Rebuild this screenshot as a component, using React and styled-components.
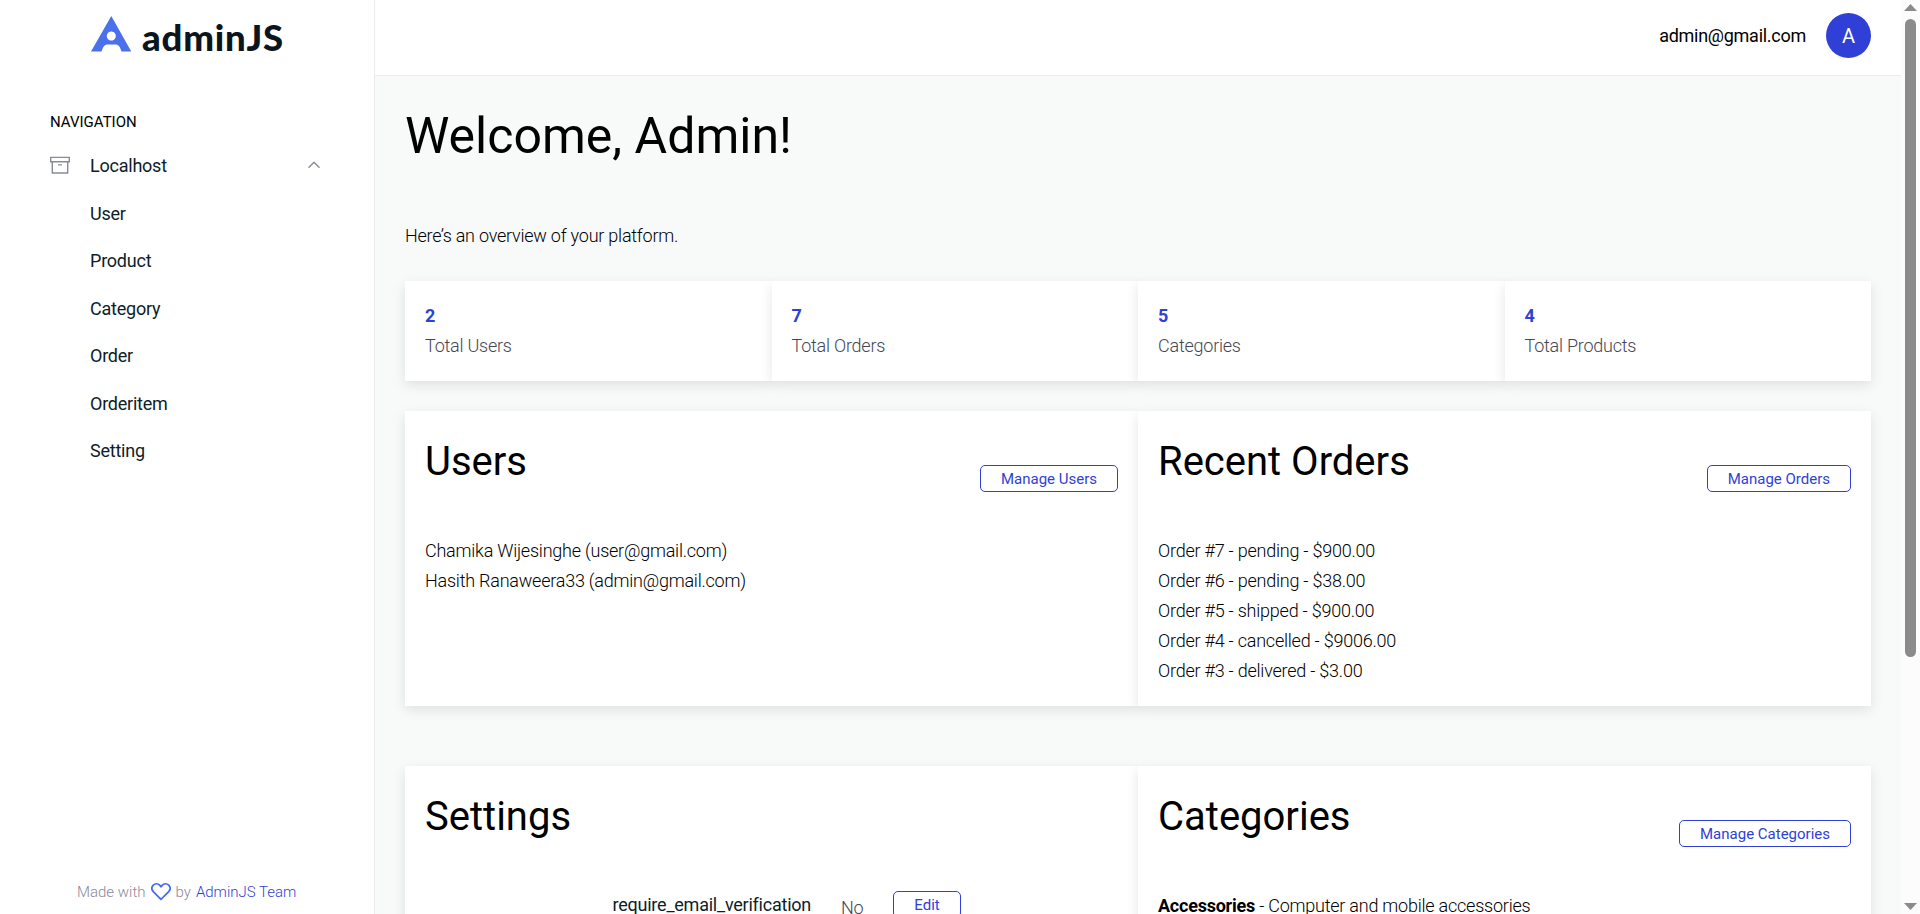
import React from 'react';
import styled, { createGlobalStyle } from 'styled-components';

const GlobalStyle = createGlobalStyle`
  * { box-sizing: border-box; }
  html, body { margin: 0; height: 100%; overflow: hidden; }
  body {
    background: #fff;
    color: #000;
    font-family: Roboto, "Liberation Sans", sans-serif;
    font-size: 18px;
    font-weight: 300;
    line-height: 30px;
    letter-spacing: -0.23px;
  }
`;

const accent = '#303fd6';

const Layout = styled.div`
  display: grid;
  grid-template-columns: 375px 1fr 19px;
  height: 914px;
  overflow: hidden;
`;

const Sidebar = styled.aside`
  display: flex;
  flex-direction: column;
  border-right: 1px solid #ebecec;
  background: #fff;
`;

const LogoLink = styled.a`
  display: flex;
  padding: 14px 0 0 91px;
  height: 111px;
`;

const LogoMark = styled.svg`
  width: 40px;
  height: 40px;
`;

const LogoText = styled.span`
  margin: 0 0 0 11px;
  font: 900 36.5px/47px Lato, "Open Sans", sans-serif;
  letter-spacing: 0.8px;
  color: #0a151e;
`;

const NavTitle = styled.div`
  padding-left: 50px;
  font-size: 15px;
  font-weight: 400;
  line-height: 22px;
  letter-spacing: 0;
`;

const NavList = styled.nav`
  flex: 1;
  padding-top: 9.25px;
`;

const NavItem = styled.a`
  display: grid;
  grid-template-columns: 40px 1fr 24px;
  align-items: center;
  height: 47.5px;
  padding: 0 48px 0 50px;
  color: #0c1e29;
  font-weight: 400;
`;

const NavLabel = styled.span`
  grid-column: 2;
`;

const NavIcon = styled.svg`
  display: block;
  fill: none;
  stroke: #898a9a;
`;

const Credit = styled.footer`
  display: flex;
  align-items: center;
  height: 44px;
  padding-left: 77px;
  font-size: 15px;
  letter-spacing: 0;
  color: #898a9a;
`;

const Heart = styled.svg`
  margin: 0 5px;
  fill: none;
  stroke: #4268f6;
`;

const CreditLink = styled.a`
  margin-left: 5px;
  color: ${accent};
`;

const Main = styled.div`
  display: flex;
  flex-direction: column;
  min-width: 0;
  height: 914px;
  overflow: hidden;
  background: #f8faf9;
`;

const TopBar = styled.header`
  display: flex;
  flex: none;
  justify-content: flex-end;
  align-items: center;
  gap: 20px;
  height: 76px;
  padding: 0 30px 5px 0;
  border-bottom: 1px solid #ebecec;
  background: #fff;
  font-weight: 400;
`;

const Email = styled.span`
  padding-top: 2px;
  letter-spacing: -0.27px;
`;

const Avatar = styled.div`
  width: 45px;
  height: 45px;
  border-radius: 50%;
  background: ${accent};
  color: #fff;
  font-size: 20px;
  line-height: 46px;
  text-align: center;
`;

const Content = styled.main`
  padding: 30px 30px 0;
`;

const PageTitle = styled.h1`
  margin: 0 0 55px;
  font-size: 50px;
  font-weight: 400;
  line-height: 60px;
  letter-spacing: 0;
`;

const Intro = styled.p`
  margin: 0 0 30px;
`;

const CardRow = styled.section`
  display: flex;
  margin-bottom: ${(p) => p.$gap}px;
`;

const Card = styled.div`
  flex: 1 1 0;
  min-width: 0;
  height: ${(p) => p.$height}px;
  padding: 20px;
  background: #fff;
  box-shadow: 0 4px 12px rgba(0, 0, 0, 0.1);
`;

const StatValue = styled.div`
  color: ${accent};
  font-weight: 700;
`;

const StatLabel = styled.div`
  color: #454655;
`;

const CardHeader = styled.div`
  display: flex;
  justify-content: space-between;
  align-items: center;
  height: 95px;
  margin-bottom: 10px;
`;

const CardTitle = styled.h2`
  margin: 0 0 34px;
  font-size: 40px;
  font-weight: 400;
  line-height: 50px;
  letter-spacing: 0;
`;

const Button = styled.button`
  height: 27px;
  min-width: 68px;
  padding: 0 20px;
  border: 1px solid ${accent};
  border-radius: 5px;
  background: transparent;
  color: ${accent};
  font: 400 15px/24px Roboto, sans-serif;
`;

const Line = styled.div`
  white-space: nowrap;
`;

const SettingRow = styled.div`
  display: flex;
  align-items: flex-start;
  padding-left: 187.500px;
`;

const SettingName = styled.span`
  width: 228.500px;
  margin-top: -1px;
  color: #0c1e29;
  font-weight: 400;
`;

const SettingValue = styled.span`
  width: 52px;
  margin-top: 2px;
  color: #454655;
`;

const Strong = styled.b`
  font-weight: 700;
`;

const ScrollTrack = styled.div`
  display: flex;
  flex-direction: column;
  align-items: center;
  padding: 4px 0;
  background: #fcfcfc;
`;

const ScrollArrow = styled.svg`
  flex: none;
  width: 13px;
  height: 7px;
  fill: #8b8b8b;
`;

const ScrollThumb = styled.div`
  width: 11px;
  height: 638px;
  margin: 8px 0 auto;
  border-radius: 6px;
  background: #8b8b8b;
`;

const resources = ['User', 'Product', 'Category', 'Order', 'Orderitem', 'Setting'];

const stats = [
  ['2', 'Total Users'],
  ['7', 'Total Orders'],
  ['5', 'Categories'],
  ['4', 'Total Products'],
];

const users = [
  'Chamika Wijesinghe (user@gmail.com)',
  'Hasith Ranaweera33 (admin@gmail.com)',
];

const orders = [
  'Order #7 - pending - $900.00',
  'Order #6 - pending - $38.00',
  'Order #5 - shipped - $900.00',
  'Order #4 - cancelled - $9006.00',
  'Order #3 - delivered - $3.00',
];

function Panel({ title, action, height, children }) {
  return (
    <Card $height={height}>
      <CardHeader>
        <CardTitle>{title}</CardTitle>
        {action && <Button>{action}</Button>}
      </CardHeader>
      {children}
    </Card>
  );
}

export default function App() {
  return (
    <>
      <GlobalStyle />
      <Layout>
        <Sidebar>
          <LogoLink>
            <LogoMark viewBox="0 0 40 40">
              <path
                fill="#4b70ec"
                fillRule="evenodd"
                d="M20.300 2 L40.300 37.500 H30.500 Q28.500 30.500 25 30.500 H16 Q12.500 30.500 10.500 37.500 H0 Z M20.300 17.500 a4.500 4.500 0 1 0 .01 0 Z"
              />
            </LogoMark>
            <LogoText>adminJS</LogoText>
          </LogoLink>
          <NavTitle>NAVIGATION</NavTitle>
          <NavList>
            <NavItem>
              <NavIcon width="20" height="20" viewBox="0 0 20 20" strokeWidth="1.4">
                <path d="M.7 1.400h18.600v4.300H.7zM2.300 5.700V17h15.400V5.700M8 8.900h4" />
              </NavIcon>
              <NavLabel>Localhost</NavLabel>
              <NavIcon width="24" height="14" viewBox="0 0 24 14" strokeWidth="1.4">
                <path d="M6.500 8.800 12 3.300l5.500 5.500" />
              </NavIcon>
            </NavItem>
            {resources.map((name) => (
              <NavItem key={name}>
                <NavLabel>{name}</NavLabel>
              </NavItem>
            ))}
          </NavList>
          <Credit>
            Made with
            <Heart width="20" height="20" viewBox="0 0 20 20" strokeWidth="1.7">
              <path d="M10 17.300 2.300 9.600C.5 7.600.5 5 2.300 3.200c1.900-1.900 4.600-1.700 6.300 0L10 4.700l1.400-1.500c1.700-1.700 4.400-1.900 6.300 0 1.800 1.800 1.800 4.400 0 6.400Z" />
            </Heart>
            by
            <CreditLink>AdminJS Team</CreditLink>
          </Credit>
        </Sidebar>
        <Main>
          <TopBar>
            <Email>admin@gmail.com</Email>
            <Avatar>A</Avatar>
          </TopBar>
          <Content>
            <PageTitle>Welcome, Admin!</PageTitle>
            <Intro>Here’s an overview of your platform.</Intro>
            <CardRow $gap={30}>
              {stats.map(([value, label]) => (
                <Card key={label} $height={100}>
                  <StatValue>{value}</StatValue>
                  <StatLabel>{label}</StatLabel>
                </Card>
              ))}
            </CardRow>
            <CardRow $gap={60}>
              <Panel title="Users" action="Manage Users" height={295}>
                {users.map((u) => (
                  <Line key={u}>{u}</Line>
                ))}
              </Panel>
              <Panel title="Recent Orders" action="Manage Orders" height={295}>
                {orders.map((o) => (
                  <Line key={o}>{o}</Line>
                ))}
              </Panel>
            </CardRow>
            <CardRow $gap={30}>
              <Panel title="Settings" height={295}>
                <SettingRow>
                  <SettingName>require_email_verification</SettingName>
                  <SettingValue>No</SettingValue>
                  <Button>Edit</Button>
                </SettingRow>
              </Panel>
              <Panel title="Categories" action="Manage Categories" height={295}>
                <Line>
                  <Strong>Accessories</Strong> - Computer and mobile accessories
                </Line>
              </Panel>
            </CardRow>
          </Content>
        </Main>
        <ScrollTrack>
          <ScrollArrow viewBox="0 0 13 7">
            <path d="M6.500 0 13 7H0z" />
          </ScrollArrow>
          <ScrollThumb />
          <ScrollArrow viewBox="0 0 13 7">
            <path d="M0 0h13L6.500 7z" />
          </ScrollArrow>
        </ScrollTrack>
      </Layout>
    </>
  );
}
